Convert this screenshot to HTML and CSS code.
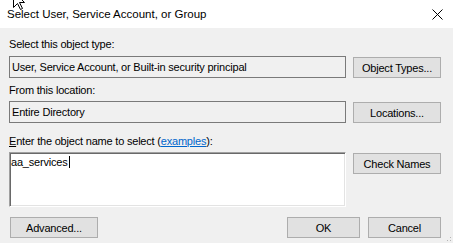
FILE: index.html
```html
<!DOCTYPE html>
<html lang="en">
<head>
    <meta charset="UTF-8">
    <title>Select User, Service Account, or Group</title>
    <link rel="stylesheet" href="styles.css">
</head>
<body>
    <div class="dialog">
        <div class="titlebar">
            <span class="title">Select User, Service Account, or Group</span>
            <svg class="close" width="11" height="11" viewBox="0 0 11 11">
                <path d="M0.5 0.5 L10.5 10.5 M10.5 0.5 L0.5 10.5" stroke="#000" stroke-width="1" fill="none"/>
            </svg>
        </div>

        <div class="content">
            <div class="label label-first">Select this object type:</div>
            <div class="row row-first">
                <div class="field">User, Service Account, or Built-in security principal</div>
                <button class="btn">Object Types...</button>
            </div>

            <div class="label label-second">From this location:</div>
            <div class="row">
                <div class="field">Entire Directory</div>
                <button class="btn">Locations...</button>
            </div>

            <div class="label label-third"><u>E</u>nter the object name to select (<a class="link" href="#">examples</a>):</div>
            <div class="row">
                <div class="names"><span class="typed">aa_services</span></div>
                <button class="btn">Check Names</button>
            </div>

            <div class="footer">
                <button class="btn btn-advanced">Advanced...</button>
                <div class="actions">
                    <button class="btn btn-small">OK</button>
                    <button class="btn btn-small">Cancel</button>
                </div>
            </div>
        </div>

        <svg class="grip" width="6" height="6" viewBox="0 0 6 6">
            <rect x="4" y="1" width="1" height="1" fill="#b5b5b5"/>
            <rect x="1" y="4" width="1" height="1" fill="#b5b5b5"/>
            <rect x="4" y="4" width="1" height="1" fill="#b5b5b5"/>
        </svg>

        <svg class="pointer" width="13" height="20" viewBox="0 0 13 20">
            <path d="M0.5 0.5 L0.5 16.5 L4.5 12.5 L7.5 18.5 L9.5 17.5 L6.5 11.5 L11.5 11.5 Z" fill="#fff" stroke="#000" stroke-width="1"/>
        </svg>
    </div>
</body>
</html>
```

FILE: styles.css
```css
body {
    margin: 0;
    padding: 0;
    background-color: #f0f0f0;
    font-family: 'Liberation Sans', Arial, sans-serif;
    font-size: 11px;
    color: #000;
}

.dialog {
    position: relative;
    width: 453px;
    height: 243px;
    overflow: hidden;
    background-color: #f0f0f0;
}

.titlebar {
    height: 28px;
    background-color: #fff;
    display: flex;
    align-items: center;
    justify-content: space-between;
    padding: 0 10px 1px 7px;
    box-sizing: border-box;
}

.title {
    font-size: 11.5px;
}

.close {
    display: block;
    margin-top: 1px;
}

.content {
    padding: 0 12px 0 9px;
    letter-spacing: -0.2px;
}

.label {
    line-height: 13px;
    height: 13px;
}

.label-first {
    margin-top: 10px;
}

.label-second {
    margin-top: 6px;
}

.label-third {
    margin-top: 12px;
}

.link {
    color: #0066cc;
}

.row {
    display: flex;
    align-items: flex-start;
    margin-top: 4px;
}

.row-first {
    margin-top: 5px;
}

.field {
    flex: 1;
    height: 22px;
    box-sizing: border-box;
    border: 1px solid #7a7a7a;
    background-color: #f0f0f0;
    padding-left: 2px;
    line-height: 20px;
    white-space: nowrap;
    overflow: hidden;
}

.names {
    flex: 1;
    height: 55px;
    box-sizing: border-box;
    background-color: #fff;
    border-top: 1px solid #a0a0a0;
    border-left: 1px solid #a0a0a0;
    border-right: 1px solid #fff;
    border-bottom: 1px solid #fff;
    box-shadow: inset 1px 1px 0 #696969, inset -1px -1px 0 #e3e3e3;
    padding: 3px 0 0 1px;
    line-height: 13px;
}

.typed {
    border-right: 1px solid #000;
    padding-right: 1px;
}

.btn {
    width: 88px;
    height: 21px;
    margin: 1px 0 0 7px;
    padding: 0;
    border: 1px solid #adadad;
    background-color: #e1e1e1;
    font-family: 'Liberation Sans', Arial, sans-serif;
    font-size: 11px;
    letter-spacing: -0.2px;
    color: #000;
    box-sizing: border-box;
}

.footer {
    display: flex;
    justify-content: space-between;
    margin-top: 10px;
}

.btn-advanced {
    margin: 0 0 0 1px;
}

.actions {
    display: flex;
    gap: 8px;
}

.btn-small {
    width: 73px;
    margin: 0;
}

.grip {
    position: absolute;
    right: 1px;
    bottom: 1px;
}

.pointer {
    position: absolute;
    left: 13px;
    top: -9px;
}
```
